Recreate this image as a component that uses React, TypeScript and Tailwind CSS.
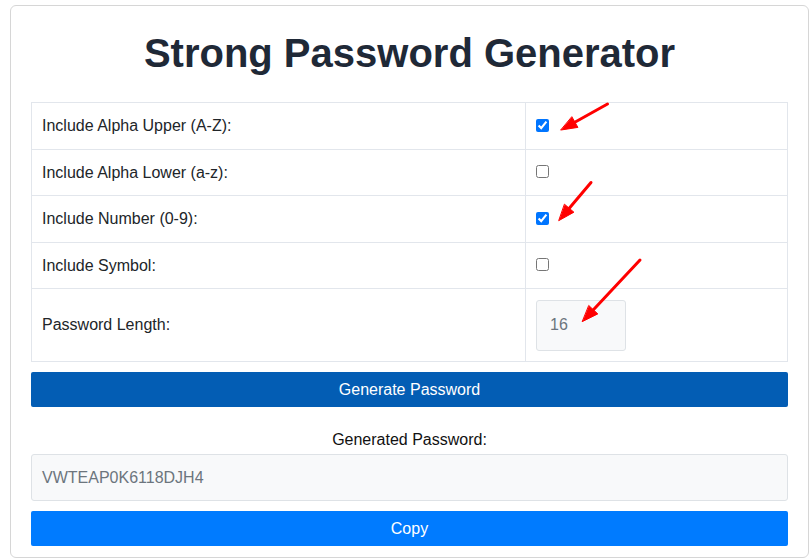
import React from "react";

const options = [
  { label: "Include Alpha Upper (A-Z):", checked: true, h: "h-[46px]" },
  { label: "Include Alpha Lower (a-z):", checked: false, h: "h-[46px]" },
  { label: "Include Number (0-9):", checked: true, h: "h-[47px]" },
  { label: "Include Symbol:", checked: false, h: "h-[46px]" },
];

function Arrows() {
  // red annotation arrows drawn over the screenshot
  return (
    <svg
      className="pointer-events-none absolute left-0 top-0"
      width="809"
      height="560"
      viewBox="0 0 809 560"
    >
      <g stroke="#ff0000" strokeWidth="3" strokeLinecap="round" fill="#ff0000">
        <line x1="607.5" y1="99" x2="573" y2="118.3" />
        <polygon points="561,125 577.9,122.4 572,112" strokeWidth="1" />
        <line x1="591" y1="177.5" x2="568" y2="204.8" />
        <polygon points="559,215.5 573.9,207.2 564.7,199.4" strokeWidth="1" />
        <line x1="640" y1="255" x2="592" y2="306.3" />
        <polygon points="582.5,316.5 597.8,308.9 589,300.7" strokeWidth="1" />
      </g>
    </svg>
  );
}

export default function App() {
  return (
    <div className="relative min-h-[560px] bg-white font-['Liberation_Sans',Arial,sans-serif] text-[16px] text-[#212529]">
      <div className="ml-[10px] mt-[5px] w-[799px] rounded-[6px] border border-[#d6d6d6] px-[20px] pb-[11px] pt-[24px]">
        <h1 className="mb-[26px] text-center text-[40px] font-bold leading-[46px] text-[#1f2937]">
          Strong Password Generator
        </h1>

        <div className="border border-[#e2e6ec]">
          {options.map((o, i) => (
            <div
              key={o.label}
              className={`flex ${o.h} ${i > 0 ? "border-t border-[#e2e6ec]" : ""}`}
            >
              <div className="flex w-[494px] items-center border-r border-[#e2e6ec] px-[10px]">
                {o.label}
              </div>
              <div className="flex items-center px-[10px]">
                <input
                  type="checkbox"
                  defaultChecked={o.checked}
                  className="mb-[2px] h-[13px] w-[13px] accent-[#0075ff]"
                />
              </div>
            </div>
          ))}
          <div className="flex h-[73px] border-t border-[#e2e6ec]">
            <div className="flex w-[494px] items-center border-r border-[#e2e6ec] px-[10px]">
              Password Length:
            </div>
            <div className="flex items-center px-[10px]">
              <input
                type="text"
                readOnly
                value="16"
                className="h-[51px] w-[90px] rounded-[3px] border border-[#dee2e6] bg-[#f8f9fa] px-[13px] text-[16px] text-[#6c757d] outline-none"
              />
            </div>
          </div>
        </div>

        <button className="mt-[10px] h-[35px] w-full rounded-[2px] bg-[#035db4] text-[16px] text-white">
          Generate Password
        </button>

        <div className="mb-[5px] mt-[24px] text-center leading-[18px] text-[#111]">
          Generated Password:
        </div>
        <div className="flex h-[47px] items-center rounded-[3px] border border-[#dee2e6] bg-[#f8f9fa] px-[10px] text-[#6c757d]">
          VWTEAP0K6118DJH4
        </div>

        <button className="mt-[10px] h-[35px] w-full rounded-[2px] bg-[#007bff] text-[16px] text-white">
          Copy
        </button>
      </div>
      <Arrows />
    </div>
  );
}
